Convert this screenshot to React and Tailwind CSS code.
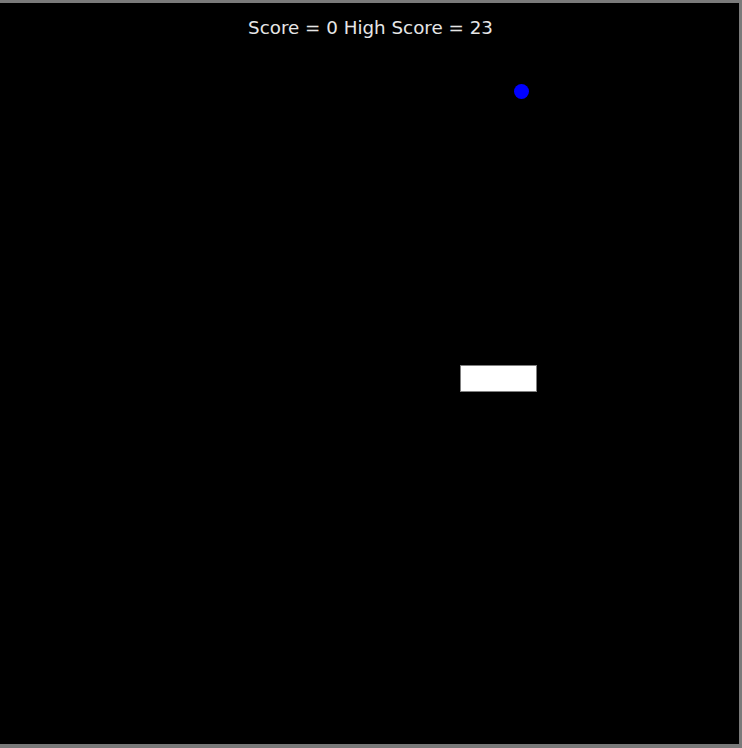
export default function App() {
  return (
    <div className="relative w-[742px] h-[748px] bg-black border-t-[3px] border-r-[3px] border-b-[4px] border-[#7a7a7a] overflow-hidden">
      <div
        className="pt-[13px] pl-[2px] text-center text-[18.3px] leading-[24px] text-[#e6e6e6]"
        style={{ fontFamily: '"DejaVu Sans", Verdana, sans-serif' }}
      >
        Score = 0 High Score = 23
      </div>
      <div className="absolute left-[514px] top-[81px] w-[15px] h-[15px] rounded-full bg-[#0000ff]" />
      <div className="absolute left-[460px] top-[362px] w-[77px] h-[27px] bg-white border border-[#808080]" />
    </div>
  );
}
